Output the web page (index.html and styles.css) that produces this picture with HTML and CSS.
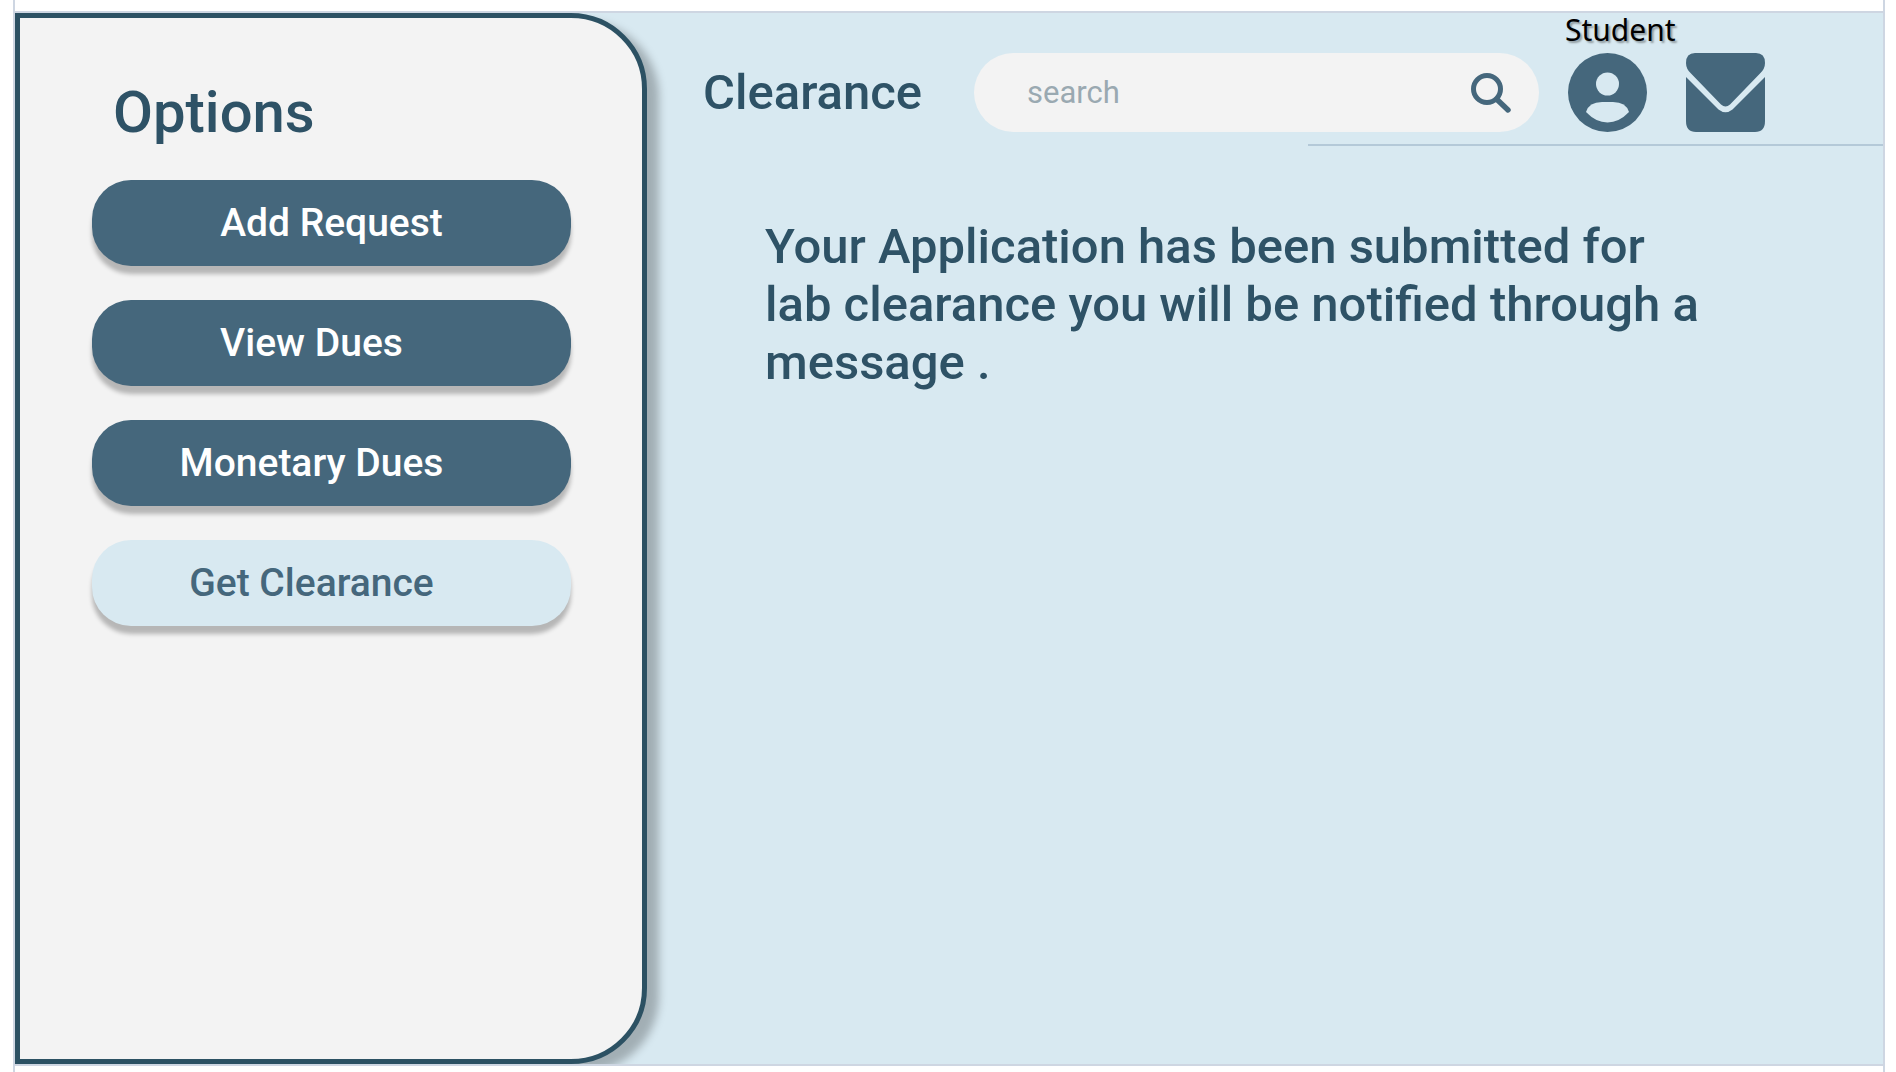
FILE: index.html
```html
<!DOCTYPE html>
<html lang="en">
<head>
<meta charset="utf-8">
<meta name="viewport" content="width=device-width, initial-scale=1">
<title>Clearance</title>
<link rel="stylesheet" href="styles.css">
</head>
<body>
<div class="page">
  <div class="app">
    <aside class="sidebar">
      <h2 class="sidebar-title">Options</h2>
      <nav class="menu" aria-label="Options">
        <button type="button" class="menu-button menu-button-centered">Add Request</button>
        <button type="button" class="menu-button">View Dues</button>
        <button type="button" class="menu-button">Monetary Dues</button>
        <button type="button" class="menu-button menu-button-active">Get Clearance</button>
      </nav>
    </aside>
    <main class="content">
      <header class="topbar">
        <h1 class="title">Clearance</h1>
        <form class="search" role="search">
          <input class="search-input" type="text" placeholder="search" aria-label="Search">
          <button type="button" class="icon-button" aria-label="Search">
            <svg class="icon-search" viewBox="0 0 40 40" fill="none" stroke="currentColor">
              <circle cx="16" cy="16" r="13.5" stroke-width="5"/>
              <path d="M26 26.5L37 37" stroke-width="5.4" stroke-linecap="round"/>
            </svg>
          </button>
        </form>
        <div class="user">
          <span class="user-name">Student</span>
          <button type="button" class="icon-button user-button" aria-label="Account">
            <svg class="icon-large" viewBox="0 0 79 79">
              <circle cx="39.500" cy="39.500" r="39.500" fill="currentColor"/>
              <circle class="cutout" cx="39.500" cy="31" r="11.500"/>
              <path class="cutout" d="M18 59Q21 49 34 49H45Q58 49 61 59Q51 69.500 39.500 69.500Q28 69.500 18 59Z"/>
            </svg>
          </button>
        </div>
        <button type="button" class="icon-button mail-button" aria-label="Messages">
          <svg class="icon-large" viewBox="0 0 79 79" fill="currentColor">
            <path d="M9 0H70Q79 0 79 10Q79 16 74 20.500L44 51.500Q39.500 55.500 35 51.500L5 20.500Q0 16 0 10Q0 0 9 0Z"/>
            <path d="M0 24L32.500 56.500Q39.500 62 46.500 56.500L79 24V68Q79 79 69 79H10Q0 79 0 68Z"/>
          </svg>
        </button>
      </header>
      <hr class="divider">
      <p class="message">Your Application has been submitted for lab clearance you will be notified through a message .</p>
    </main>
  </div>
</div>
</body>
</html>
```
FILE: styles.css
```css
* {
  box-sizing: border-box;
}

body {
  margin: 0;
  background: #fff;
  color: #2e5266;
  font-family: Roboto, "Liberation Sans", sans-serif;
  font-weight: 500;
}

button,
input {
  font: inherit;
  border: 0;
  padding: 0;
}

h1,
h2,
p {
  margin: 0;
  font-weight: 500;
}

.page {
  display: flex;
  min-height: 100vh;
  margin: 0 11px 0 13px;
  padding: 11px 0 6px;
  border: solid #ced6e2;
  border-width: 0 2px;
}

.app {
  flex: 1;
  display: grid;
  grid-template-columns: 632px 1fr;
  background: #d8e9f1;
  border: solid #ced6e2;
  border-width: 2px 0;
}

.sidebar {
  padding: 60px 71px 40px 72px;
  background: #f3f3f3;
  border: 5px solid #2c5163;
  border-radius: 0 76px 76px 0;
  box-shadow: 12px 8px 8px rgba(0, 0, 0, 0.25);
  /* keeps the shadow on the right only, inside the frame */
  clip-path: inset(0 -40px 0 0);
}

.sidebar-title {
  padding-left: 21px;
  font-size: 58px;
  line-height: 68px;
}

.menu {
  display: grid;
  gap: 34px;
  margin-top: 34px;
}

.menu-button {
  height: 86px;
  padding-right: 40px;
  border-radius: 39px;
  background: #45677c;
  box-shadow: 0 8px 4px rgba(0, 0, 0, 0.25);
  color: #fff;
  font-size: 39px;
}

.menu-button-centered {
  padding-right: 0;
}

.menu-button-active {
  background: #d8e9f1;
  color: #45677c;
}

.content {
  min-width: 0;
}

.topbar {
  display: flex;
  align-items: flex-end;
  padding-left: 56px;
}

.title {
  font-size: 49px;
  line-height: 79px;
}

.search {
  flex: none;
  display: flex;
  align-items: center;
  width: 565px;
  height: 79px;
  margin: 0 26px 0 auto;
  padding: 0 28px 0 53px;
  border-radius: 40px;
  background: #f3f3f3;
}

.search-input {
  flex: 1;
  min-width: 0;
  background: none;
  color: #2e5266;
  font-size: 31px;
  font-weight: 400;
}

.search-input::placeholder {
  color: #9aa9b1;
  opacity: 1;
}

.icon-button {
  display: block;
  background: none;
  color: #45677c;
}

.icon-button svg {
  display: block;
}

.icon-search {
  width: 40px;
  height: 40px;
}

.icon-large {
  width: 79px;
  height: 79px;
}

.cutout {
  fill: #d8e9f1;
}

.user {
  width: 112px;
}

.user-name {
  display: block;
  margin-bottom: 7px;
  color: #000;
  font-family: "Noto Sans", sans-serif;
  font-size: 30px;
  font-weight: 400;
  line-height: 33px;
  text-shadow: 2px 2px 2px rgba(0, 0, 0, 0.35);
}

.user-button {
  margin-left: 3px;
}

.mail-button {
  margin: 0 118px 0 9px;
}

.divider {
  width: 575px;
  height: 2px;
  margin: 12px 0 0 auto;
  border: 0;
  background: #b4c9d8;
}

.message {
  max-width: 1080px;
  padding: 72px 24px 0 118px;
  font-size: 49px;
  line-height: 58px;
}
```
